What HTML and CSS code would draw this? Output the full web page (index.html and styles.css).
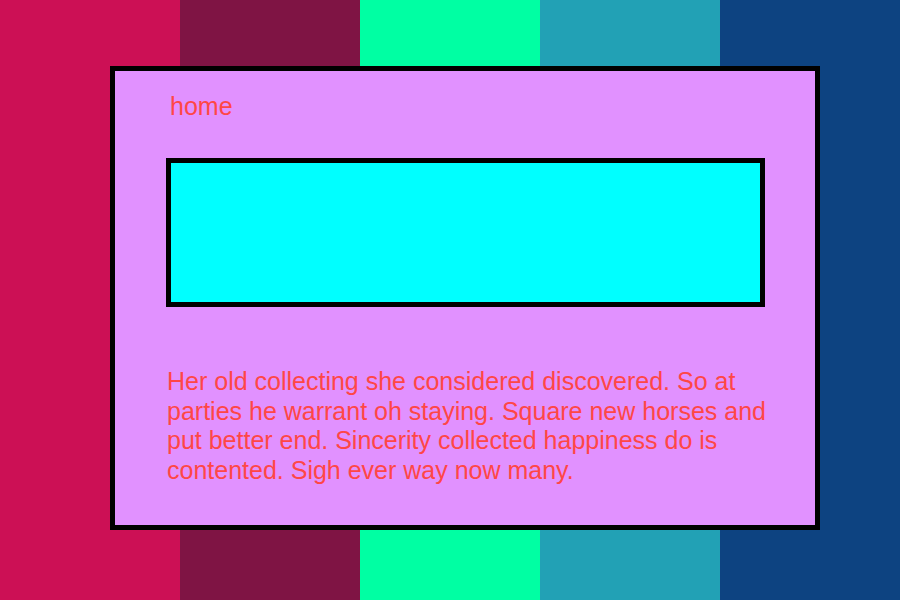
FILE: index.html
```html
<!DOCTYPE html>
<html>
<head>
<meta charset="utf-8">
<link rel="stylesheet" href="styles.css">
</head>
<body>
<main class="card">
  <div class="home">home</div>
  <div class="banner"></div>
  <p class="text">Her old collecting she considered discovered. So at parties he warrant oh staying. Square new horses and put better end. Sincerity collected happiness do is contented. Sigh ever way now many.</p>
</main>
</body>
</html>
```
FILE: styles.css
```css
html, body {
  margin: 0;
  padding: 0;
}
body {
  width: 900px;
  height: 600px;
  overflow: hidden;
  background: linear-gradient(to right,
    #cc1055 0, #cc1055 180px,
    #7f1444 180px, #7f1444 360px,
    #00ffa3 360px, #00ffa3 540px,
    #22a1b5 540px, #22a1b5 720px,
    #0d4381 720px, #0d4381 900px);
  font-family: "Liberation Sans", Arial, sans-serif;
  display: flow-root;
}
.card {
  box-sizing: border-box;
  width: 710px;
  height: 464px;
  margin: 66px 0 0 110px;
  border: 5px solid #000;
  background: #e191ff;
  padding: 21px 0 0 51px;
  color: #ff4646;
}
.home {
  font-size: 25px;
  line-height: 28px;
  padding-left: 4px;
}
.banner {
  box-sizing: border-box;
  width: 599px;
  height: 149px;
  margin-top: 38px;
  border: 5px solid #000;
  background: #00ffff;
}
.text {
  margin: 60px 0 0 1px;
  width: 606px;
  font-size: 25px;
  line-height: 29.7px;
}
```
